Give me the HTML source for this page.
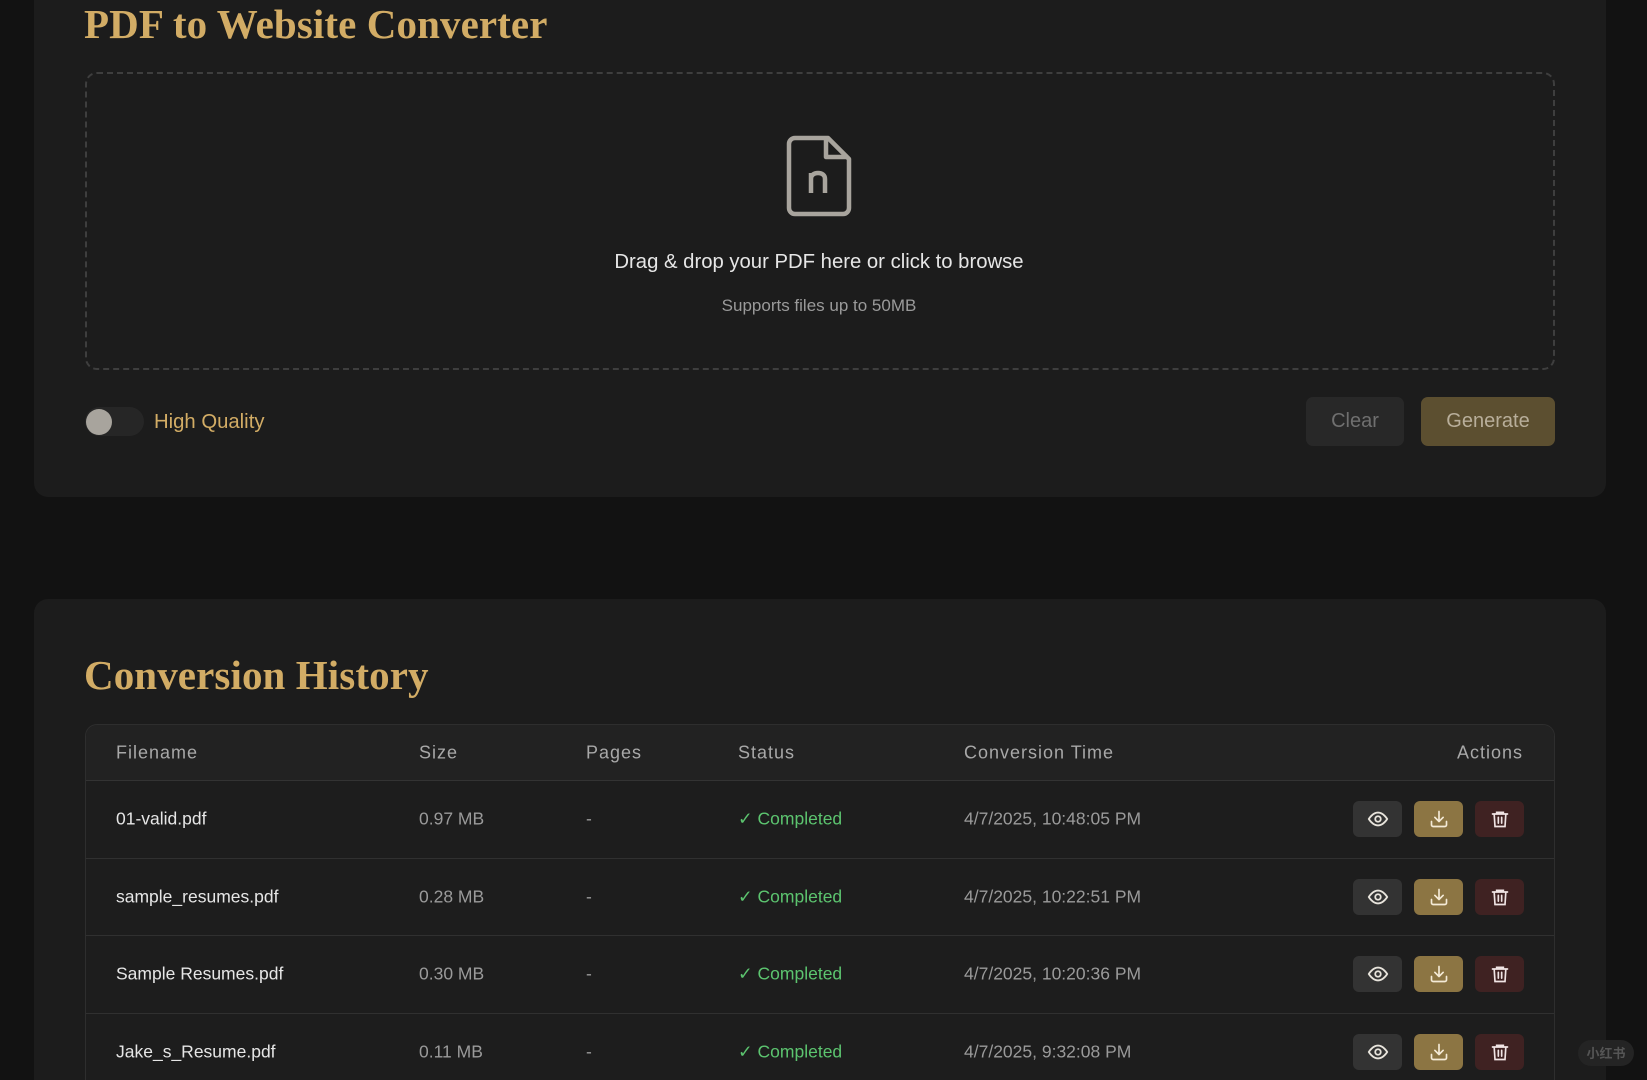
<!DOCTYPE html>
<html style="width:1647px;height:1080px;overflow:hidden"><head><meta charset="utf-8"><style>
*{box-sizing:border-box;margin:0;padding:0}
body{width:1647px;height:1080px;background:#121212;overflow:hidden;font-family:"Liberation Sans",sans-serif;position:relative}
.card{position:absolute;left:34px;width:1572px;background:#1c1c1c;border-radius:14px}
h1{font-family:"Liberation Serif",serif;font-weight:bold;color:#d2ac65;font-size:41px;position:absolute;left:84px;letter-spacing:0.1px}
.drop{position:absolute;left:85px;top:72px;width:1470px;height:298px;border:2px dashed #3e3e3e;border-radius:12px}
.t{position:absolute;white-space:nowrap}
.btn{position:absolute;border-radius:7px;display:flex;align-items:center;justify-content:center;font-size:20px}
.tbl{position:absolute;left:85px;top:724px;width:1470px;height:356px;border:1px solid #2e2e2e;border-bottom:none;border-radius:12px 12px 0 0;overflow:hidden}
.hd{height:56px;background:#222;border-bottom:1px solid #333;position:relative}
.row{height:77.5px;border-bottom:1px solid #303030;position:relative;background:#1d1d1d}
.c{position:absolute;top:50%;transform:translateY(-50%);font-size:17.5px;color:#e6e6e6;white-space:nowrap}
.hd .c{color:#a8a8a8;font-size:18px;letter-spacing:1px}
.g{color:#9a9a9a}
.ok{color:#5cc46f}
.ab{position:absolute;top:50%;margin-top:-18px;width:49px;height:36px;border-radius:6px;display:flex;align-items:center;justify-content:center}
</style></head><body>
<div class="card" style="top:-20px;height:517px"></div>
<h1 style="top:0px">PDF to Website Converter</h1>
<div class="drop"></div>
<svg class="t" style="left:786px;top:135px" width="66" height="82" viewBox="0 0 66 82" fill="none" stroke="#a8a49d" stroke-width="4.5" stroke-linejoin="round"><path d="M9 3H42L63 24V73a6 6 0 0 1-6 6H9a6 6 0 0 1-6-6V9a6 6 0 0 1 6-6Z"/><path d="M40 3V22H62" /><path d="M25 58V38M25 44c0-4 3-6 7-6s7 2 7 6v14"/></svg>
<div class="t" style="left:0;width:1638px;text-align:center;top:251px;font-size:20.3px;color:#e6e6e6">Drag &amp; drop your PDF here or click to browse</div>
<div class="t" style="left:0;width:1638px;text-align:center;top:296px;font-size:17px;color:#9a9a9a">Supports files up to 50MB</div>
<div class="t" style="left:85px;top:407px;width:59px;height:29px;border-radius:15px;background:#262626"></div>
<div class="t" style="left:86px;top:409px;width:26px;height:26px;border-radius:13px;background:#a8a49d"></div>
<div class="t" style="left:154px;top:411px;font-size:20.3px;color:#d2ac65">High Quality</div>
<div class="btn" style="left:1306px;top:397px;width:98px;height:49px;background:#282828;color:#6f6f6f">Clear</div>
<div class="btn" style="left:1421px;top:397px;width:134px;height:49px;background:#5c4f30;color:#b8ae9a">Generate</div>

<div class="card" style="top:599px;height:481px;border-radius:14px 14px 0 0"></div>
<h1 style="top:651px">Conversion History</h1>
<div class="tbl">
<div class="hd"><span class="c" style="left:30px">Filename</span><span class="c" style="left:333px">Size</span><span class="c" style="left:500px">Pages</span><span class="c" style="left:652px">Status</span><span class="c" style="left:878px">Conversion Time</span><span class="c" style="right:31px">Actions</span></div>
<div id="rows"></div>
</div>
<div class="t" style="left:1578px;top:1040px;width:56px;height:26px;border-radius:13px;background:#242424;color:#555;font-size:13px;text-align:center;line-height:26px;font-family:'Noto Sans CJK SC',sans-serif;font-weight:bold">小红书</div>
<script>
var d=[["01-valid.pdf","0.97 MB","4/7/2025, 10:48:05 PM"],["sample_resumes.pdf","0.28 MB","4/7/2025, 10:22:51 PM"],["Sample Resumes.pdf","0.30 MB","4/7/2025, 10:20:36 PM"],["Jake_s_Resume.pdf","0.11 MB","4/7/2025, 9:32:08 PM"]];
var eye='<svg width="22" height="22" viewBox="0 0 24 24" fill="none" stroke="#e8e4dc" stroke-width="2"><path d="M2 12s4-7 10-7 10 7 10 7-4 7-10 7S2 12 2 12Z"/><circle cx="12" cy="12" r="3"/></svg>';
var dl='<svg width="20" height="20" viewBox="0 0 24 24" fill="none" stroke="#f4ead6" stroke-width="2" stroke-linecap="round" stroke-linejoin="round"><path d="M12 3v12M7 10l5 5 5-5M3 15v4a2 2 0 0 0 2 2h14a2 2 0 0 0 2-2v-4"/></svg>';
var tr='<svg width="20" height="20" viewBox="0 0 24 24" fill="none" stroke="#f0e4e4" stroke-width="2" stroke-linecap="round"><path d="M3 6h18M8 6V4h8v2M5 6l1 15h12l1-15M10 10v7M14 10v7"/></svg>';
var h='';d.forEach(function(r){h+='<div class="row"><span class="c" style="left:30px">'+r[0]+'</span><span class="c g" style="left:333px">'+r[1]+'</span><span class="c g" style="left:500px">-</span><span class="c ok" style="left:652px">&#10003;&nbsp;Completed</span><span class="c g" style="left:878px">'+r[2]+'</span><div class="ab" style="left:1267px;background:#333">'+eye+'</div><div class="ab" style="left:1328px;background:#8c7543">'+dl+'</div><div class="ab" style="left:1389px;background:#3f2222">'+tr+'</div></div>'});
document.getElementById('rows').innerHTML=h;
</script>
</body></html>
